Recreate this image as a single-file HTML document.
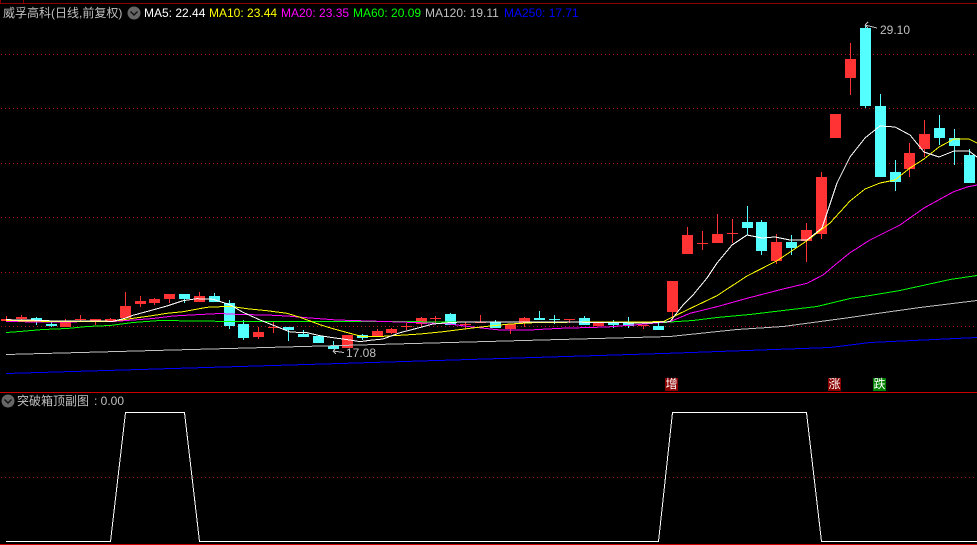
<!DOCTYPE html>
<html>
<head>
<meta charset="utf-8">
<style>
html,body{margin:0;padding:0;background:#000;}
body{width:977px;height:545px;overflow:hidden;position:relative;font-family:"Liberation Sans","Noto Sans CJK SC",sans-serif;font-size:12px;}
svg{position:absolute;left:0;top:0;}
.t{position:absolute;top:6px;line-height:14px;white-space:pre;color:#c0c0c0;}
.tag{position:absolute;top:378px;width:13px;height:13px;line-height:13px;text-align:center;color:#fff;font-size:12px;}
</style>
</head>
<body>
<svg width="977" height="545" viewBox="0 0 977 545">
  <g shape-rendering="crispEdges" fill="none">
    <path d="M0 3.5H977M23.5 0V3M0.5 0V3" stroke="#8b0000"/>
    <path d="M1 54.5H977M1 108.5H977M1 163.5H977M1 217.5H977M1 272.5H977M1 326.5H977" stroke="#a81818" stroke-dasharray="1 3"/>
    <path d="M1 477.5H977" stroke="#901818" stroke-dasharray="1 3"/>
    <path d="M0 392.5H977M0 544.5H977" stroke="#cc0000"/>
    <path stroke="#ff3333" d="M6.5 316V321M21.5 315V321M65.5 319V327M80.5 315V322M95.5 319V325M110.5 318V321M125.5 292V318M140.5 296V307M154.5 298V305M169.5 294V303M199.5 292V302M258.5 327V339M273.5 322V333M377.5 329V336M391.5 328V334M406.5 323V330M421.5 317V327M435.5 316V323M465.5 322V329M480.5 315V323M510.5 324V334M524.5 317V327M569.5 319V323M643.5 325V329M672.5 281V320M687.5 227V254M702.5 231V250M717.5 214V243M732.5 219V243M776.5 234V264M806.5 223V262M821.5 172V239M850.5 43V95M909.5 143V177M924.5 120V157"/>
    <path stroke="#54ffff" d="M36.5 317V325M51.5 322V327M184.5 294V303M214.5 293V302M229.5 300V329M243.5 320V340M288.5 327V341M303.5 330V337M333.5 341V349M362.5 334V340M450.5 313V325M495.5 320V328M539.5 311V320M554.5 315V324M584.5 316V325M613.5 320V328M628.5 317V328M658.5 323V330M747.5 206V235M761.5 220V255M791.5 235V255M865.5 25V108M880.5 94V177M895.5 160V191M939.5 115V145M954.5 129V165M969.5 149V183"/>
    <path fill="#ff3333" d="M1 319h11v2h-11zM16 317h11v2h-11zM60 322h11v5h-11zM75 319h11v1h-11zM90 319h11v3h-11zM105 319h11v2h-11zM120 306h11v12h-11zM135 301h11v3h-11zM149 299h11v4h-11zM164 294h11v5h-11zM194 296h11v6h-11zM253 332h11v5h-11zM268 327h11v1h-11zM342 335h11v13h-11zM372 331h11v5h-11zM386 329h11v4h-11zM401 326h11v1h-11zM416 318h11v6h-11zM430 318h11v1h-11zM460 324h11v1h-11zM475 322h11v1h-11zM505 324h11v5h-11zM519 318h11v5h-11zM564 319h11v1h-11zM593 322h11v4h-11zM638 325h11v1h-11zM667 281h11v31h-11zM682 235h11v19h-11zM697 243h11v1h-11zM712 234h11v9h-11zM727 233h11v1h-11zM771 242h11v19h-11zM801 230h11v11h-11zM816 177h11v57h-11zM830 114h11v24h-11zM845 59h11v19h-11zM904 153h11v16h-11zM919 134h11v15h-11z"/>
    <path fill="#54ffff" d="M31 318h11v3h-11zM46 324h11v2h-11zM179 294h11v5h-11zM209 296h11v6h-11zM224 303h11v23h-11zM238 324h11v14h-11zM283 327h11v3h-11zM298 334h11v3h-11zM313 336h11v7h-11zM328 346h11v3h-11zM357 335h11v3h-11zM445 314h11v11h-11zM490 322h11v6h-11zM534 318h11v2h-11zM549 319h11v1h-11zM579 318h11v7h-11zM608 322h11v3h-11zM623 323h11v3h-11zM653 326h11v4h-11zM742 222h11v6h-11zM756 222h11v29h-11zM786 242h11v6h-11zM860 28h11v78h-11zM875 106h11v71h-11zM890 172h11v10h-11zM934 128h11v10h-11zM949 138h11v8h-11zM964 155h11v28h-11z"/>
    <polyline stroke="#0000ff" points="6,373.5 340,363.5 663,353.5 830,347.5 870,342.5 977,337.5"/>
    <polyline stroke="#c0c0c0" points="6,354.5 340,345.5 670,336.5 737,329.5 783,326.5 850,317.5 870,314.5 920,307.5 977,300.5"/>
    <polyline stroke="#00ff00" points="6,332.5 20,331.5 43,329.5 67,328.5 87,326.5 110,325.5 133,322.5 160,320.5 233,321.5 340,321.5 663,322.5 693,320.5 717,317.5 750,314.5 783,310.5 817,306.5 850,298.5 870,295.5 900,290.5 950,279.5 977,275.5"/>
    <polyline stroke="#ff00ff" points="6,321.5 43,322 113,321.5 133,320 153,318.5 173,316 200,314.5 220,313.5 240,314.5 267,315 287,316 310,318 337,320 353,320.5 400,322 447,323.7 470,326.7 500,330 530,330 560,328.3 607,327 637,324.7 663,322.3 670,321.7 690,313.3 717,306.7 747,298.3 783,289 807,283.3 823,275 837,263.3 850,252.7 870,240 900,225 924,208 953,192 967,187 977,185"/>
    <polyline stroke="#ffff00" points="6,320.5 43,321.3 113,321.3 133,318.3 150,316 167,313.3 183,311.7 207,307.3 230,306.3 247,308.7 267,310.7 287,313.3 300,317.3 320,324.7 333,328.7 350,333.3 363,336.7 383,336.3 400,335.3 420,334 443,331.7 470,328.3 490,326 510,324 533,322.7 560,322.3 607,322 663,321.7 687,310 717,295.7 747,276 777,260.7 807,240.7 830,223 850,201 865,189 880,183 895,180 910,168 924,159 939,147 954,139 969,139 977,143"/>
    <polyline stroke="#ffffff" points="6,319.7 30,320 43,320.7 113,321.3 125,318.3 133,315.3 150,310.7 167,306 183,300.7 197,298.7 213,299.3 230,304.7 243,312.3 260,320 277,326.7 290,332 307,332.7 320,335.7 333,337.7 350,340 360,341.7 370,340.3 383,339 400,332.7 417,328.3 433,324 453,322.3 480,322 560,322 650,323 663,322 670,321.6 683,305 693,295 707,278 717,263 732,245 747,235 762,238 775,237 790,240 807,240 822,228 837,183 850,157 865,138 880,126 895,127 910,135 924,152 939,157 954,151 969,151 977,157"/>
    <polyline stroke="#ffffff" stroke-width="1" points="6,541.5 110.5,541.5 125.5,412.5 184.5,412.5 199.5,541.5 658.5,541.5 672.5,412.5 806.5,412.5 821.5,541.5 977,541.5"/>
    <path stroke="#c0c0c0" d="M333 351L344 352.5M333 351L336 348M333 351L336 354M865 25L877 28M865 25L868 22M865 25L868 28"/>
  </g>
  <circle cx="134" cy="13" r="6.5" fill="#666"/>
  <path d="M130.5 11.5L134 15L137.5 11.5" fill="none" stroke="#111" stroke-width="1.4"/>
  <circle cx="8" cy="401" r="6.5" fill="#666"/>
  <path d="M4.5 399.5L8 403L11.5 399.5" fill="none" stroke="#111" stroke-width="1.4"/>
</svg>
<div class="t" style="left:3px;">威孚高科(日线,前复权)</div>
<div class="t" style="left:144px;color:#fff;">MA5: 22.44</div>
<div class="t" style="left:209px;color:#ffff00;">MA10: 23.44</div>
<div class="t" style="left:281px;color:#ff00ff;">MA20: 23.35</div>
<div class="t" style="left:353px;color:#00ff00;">MA60: 20.09</div>
<div class="t" style="left:425px;color:#c0c0c0;">MA120: 19.11</div>
<div class="t" style="left:504px;color:#0000ff;">MA250: 17.71</div>
<div class="t" style="left:346px;top:346px;">17.08</div>
<div class="t" style="left:880px;top:23px;">29.10</div>
<div class="t" style="left:17px;top:394px;">突破箱顶副图</div>
<div class="t" style="left:94px;top:394px;">: 0.00</div>
<div class="tag" style="left:665px;background:#8b0000;">增</div>
<div class="tag" style="left:828px;background:#8b0000;">涨</div>
<div class="tag" style="left:873px;background:#008000;">跌</div>
</body>
</html>
